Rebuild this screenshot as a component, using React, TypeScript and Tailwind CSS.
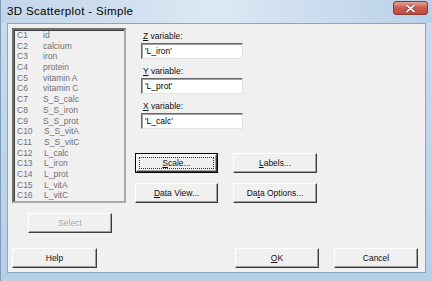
import React from "react";

const columns = [
  ["C1", "id"],
  ["C2", "calcium"],
  ["C3", "iron"],
  ["C4", "protein"],
  ["C5", "vitamin A"],
  ["C6", "vitamin C"],
  ["C7", "S_S_calc"],
  ["C8", "S_S_iron"],
  ["C9", "S_S_prot"],
  ["C10", "S_S_vitA"],
  ["C11", "S_S_vitC"],
  ["C12", "L_calc"],
  ["C13", "L_iron"],
  ["C14", "L_prot"],
  ["C15", "L_vitA"],
  ["C16", "L_vitC"],
];

const raised =
  "flex items-center justify-center bg-[#f0f0f0] border border-t-white border-l-white border-r-[#3c3c3c] border-b-[#3c3c3c] shadow-[inset_-1px_-1px_0_#a0a0a0]";

function Btn({
  children,
  className = "",
  def = false,
  disabled = false,
}: {
  children: React.ReactNode;
  className?: string;
  def?: boolean;
  disabled?: boolean;
}) {
  if (def) {
    return (
      <div className={`border border-black ${className}`}>
        <div className={`${raised} w-full h-full p-[2px]`}>
          <div className="w-full h-full border border-dotted border-[#333] flex items-center justify-center">
            {children}
          </div>
        </div>
      </div>
    );
  }
  return (
    <div
      className={`${raised} ${className} ${
        disabled ? "text-[#a3a3a3] [text-shadow:1px_1px_0_#fff]" : "text-[#111]"
      }`}
    >
      {children}
    </div>
  );
}

function Field({ label, hot, value }: { label: string; hot: string; value: string }) {
  return (
    <div className="flex flex-col">
      <div className="ml-[2px] h-[12px] leading-[12px]">
        <span className="underline">{hot}</span>
        {label}
      </div>
      <div className="mt-[1px] w-[102px] h-[16px] bg-white border border-t-[#6a6a6a] border-l-[#6a6a6a] border-r-[#e3e3e3] border-b-[#e3e3e3] shadow-[inset_1px_1px_0_#a0a0a0] pl-[3px] leading-[14px] text-black">
        {value}
      </div>
    </div>
  );
}

export default function App() {
  return (
    <div
      className="w-[432px] h-[281px] flex flex-col bg-gradient-to-b from-[#c9dcef] to-[#b6cfe9] border-l border-[#7f9db9] overflow-hidden"
      style={{ fontFamily: '"Liberation Sans", Arial, sans-serif' }}
    >
      {/* title bar */}
      <div className="h-[23px] flex items-start bg-gradient-to-r from-[#c2d5ea] via-[#dce8f4] to-[#b9d0e9] shrink-0">
        <span className="ml-[6px] mt-[4px] text-[11.5px] leading-[14px] tracking-[0.35px] text-black">
          3D Scatterplot - Simple
        </span>
        <div className="ml-auto mr-[4px] mt-[1px] w-[35px] h-[14px] rounded-[3px] border border-[#8a3a32] bg-gradient-to-b from-[#e4a196] via-[#cc5a4b] to-[#c24a3c] flex items-center justify-center">
          <svg width="11" height="9" viewBox="0 0 11 9">
            <path d="M1.5 1 L9.5 8 M9.5 1 L1.5 8" stroke="#5a2a24" strokeWidth="3" />
            <path d="M1.5 1 L9.5 8 M9.5 1 L1.5 8" stroke="#fff" strokeWidth="1.8" />
          </svg>
        </div>
      </div>

      {/* client */}
      <div className="mx-[6px] mb-[8px] flex-1 bg-[#f0f0f0] border border-[#8ca6c0] flex flex-col text-[8.5px] text-[#111]">
        <div className="flex pl-[4px] pt-[4px]">
          {/* variable list */}
          <div className="flex flex-col w-[114px]">
            <div className="h-[175px] overflow-hidden bg-[#f0f0f0] border-2 border-t-[#6e6e6e] border-l-[#6e6e6e] border-r-[#a8a8a8] border-b-[#a8a8a8] shadow-[inset_1px_1px_0_#404040] pl-[3px] text-[#707070]">
              {columns.map(([c, n]) => (
                <div key={c} className="flex h-[10.7px] leading-[10.7px]">
                  <span className={c.length > 2 ? "w-[27px]" : "w-[26px]"}>{c}</span>
                  <span>{n}</span>
                </div>
              ))}
            </div>
            <Btn disabled className="mt-[10px] ml-[16px] w-[84px] h-[20px]">
              Select
            </Btn>
          </div>

          {/* right side */}
          <div className="ml-[9px] flex flex-col">
            <div className="ml-[6px] mt-[2px] flex flex-col gap-[6px]">
              <Field hot="Z" label=" variable:" value="'L_iron'" />
              <Field hot="Y" label=" variable:" value="'L_prot'" />
              <Field hot="X" label=" variable:" value="'L_calc'" />
            </div>
            <div className="mt-[24px] grid grid-cols-[83px_84px] gap-x-[15px] gap-y-[10px]">
              <Btn def className="h-[20px]">
                <span>
                  <span className="underline">S</span>cale...
                </span>
              </Btn>
              <Btn className="h-[20px]">
                <span>
                  <span className="underline">L</span>abels...
                </span>
              </Btn>
              <Btn className="h-[20px]">
                <span>
                  <span className="underline">D</span>ata View...
                </span>
              </Btn>
              <Btn className="h-[20px]">
                <span>
                  Da<span className="underline">t</span>a Options...
                </span>
              </Btn>
            </div>
          </div>
        </div>

        {/* bottom buttons */}
        <div className="mt-[15px] flex pl-[4px] pr-[7px]">
          <Btn className="w-[85px] h-[20px]">Help</Btn>
          <Btn className="ml-auto w-[84px] h-[20px]">
            <span>
              <span className="underline">O</span>K
            </span>
          </Btn>
          <Btn className="ml-[15px] w-[84px] h-[20px]">Cancel</Btn>
        </div>
      </div>
    </div>
  );
}
